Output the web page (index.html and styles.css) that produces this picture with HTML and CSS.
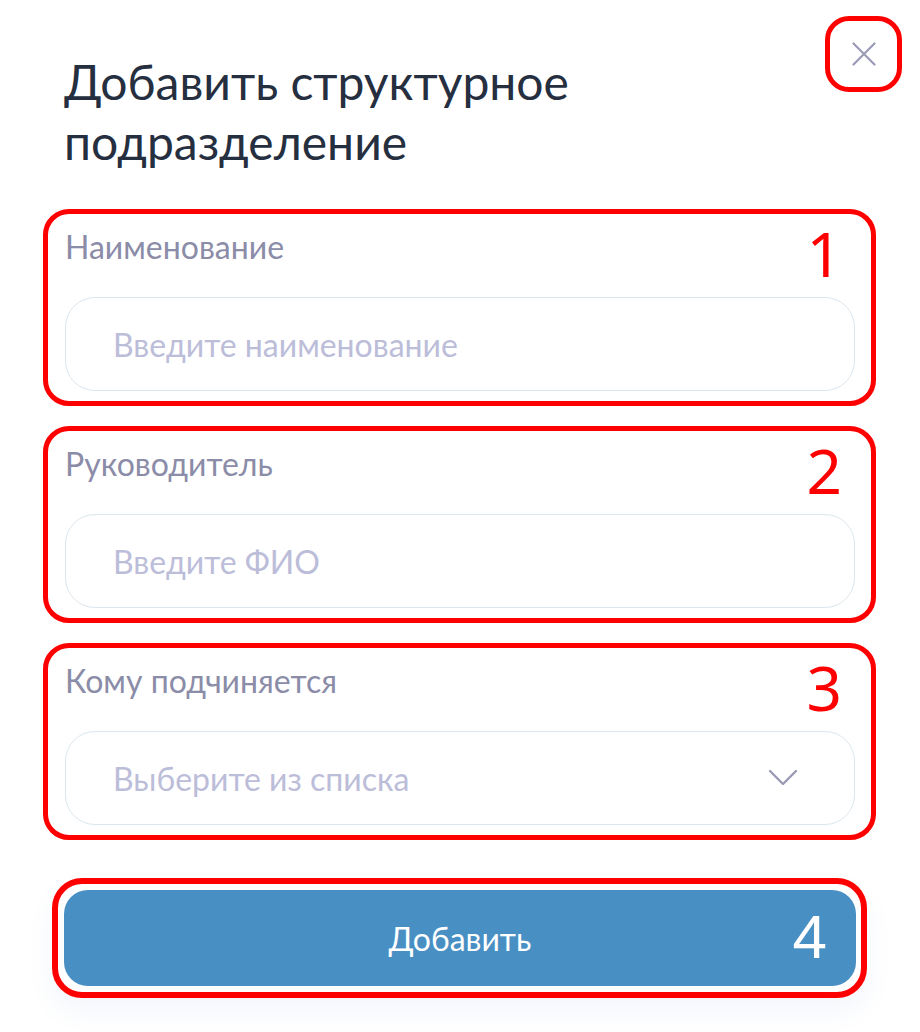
FILE: index.html
```html
<!DOCTYPE html>
<html lang="ru">
<head>
<meta charset="utf-8">
<title>Добавить структурное подразделение</title>
<link rel="stylesheet" href="styles.css">
</head>
<body>
<div class="modal">
  <div class="header">
    <h1 class="title">Добавить структурное<br>подразделение</h1>
    <button class="close" type="button" aria-label="Закрыть">
      <svg width="24" height="24" viewBox="0 0 24 24"><path d="M1.5 1.5 L22.5 22.5 M22.5 1.5 L1.5 22.5" stroke="#9a9cb6" stroke-width="2.2" stroke-linecap="round" fill="none"/></svg>
    </button>
  </div>

  <section class="field">
    <span class="mark">1</span>
    <label class="label">Наименование</label>
    <div class="input"><span class="placeholder">Введите наименование</span></div>
  </section>

  <section class="field">
    <span class="mark">2</span>
    <label class="label">Руководитель</label>
    <div class="input"><span class="placeholder">Введите ФИО</span></div>
  </section>

  <section class="field">
    <span class="mark">3</span>
    <label class="label">Кому подчиняется</label>
    <div class="input select">
      <span class="placeholder">Выберите из списка</span>
      <svg class="chevron" width="30" height="18" viewBox="0 0 30 18"><path d="M2 2 L15 15 L28 2" stroke="#9a9ab4" stroke-width="2.4" stroke-linecap="round" stroke-linejoin="round" fill="none"/></svg>
    </div>
  </section>

  <div class="action">
    <button class="submit" type="button">Добавить<span class="mark mark-light">4</span></button>
  </div>
</div>
</body>
</html>
```

FILE: styles.css
```css
* { box-sizing: border-box; }

html, body {
  margin: 0;
  padding: 0;
  background: #ffffff;
}

body {
  font-family: "Lato", "Noto Sans", sans-serif;
  width: 920px;
  height: 1032px;
  overflow: hidden;
}

.modal {
  padding: 16px 0 0 43px;
  width: 876px;
}

.header {
  display: flex;
  justify-content: space-between;
  align-items: flex-start;
  margin-right: -26px;
}

.title {
  margin: 0;
  padding: 36px 0 0 21px;
  font-size: 48px;
  line-height: 60px;
  font-weight: 400;
  color: #262f3f;
}

.close {
  width: 77px;
  height: 76px;
  border: 5px solid #ff0000;
  border-radius: 24px;
  background: #fff;
  padding: 0;
  display: flex;
  align-items: center;
  justify-content: center;
}

.field {
  position: relative;
  margin-top: 37px;
  border: 5px solid #ff0000;
  border-radius: 26px;
  padding: 15px 16px 10px 17px;
  height: 197px;
}

.field + .field {
  margin-top: 20px;
}

.label {
  display: block;
  font-size: 32px;
  line-height: 36px;
  color: #8b8ca8;
}

.input {
  margin-top: 32px;
  height: 94px;
  border: 1.5px solid #dbe7ee;
  border-radius: 30px;
  display: flex;
  align-items: center;
  padding: 0 56px 0 47px;
  justify-content: space-between;
}

.placeholder {
  font-size: 32px;
  color: #bcbdd9;
}

.chevron {
  display: block;
}

.mark {
  position: absolute;
  top: 8px;
  right: 29px;
  font-family: "Noto Sans", "Open Sans", sans-serif;
  font-size: 62px;
  line-height: 62px;
  color: #ff0000;
}

.action {
  margin-top: 38px;
  margin-left: 9px;
  width: 815px;
  height: 120px;
  border: 6px solid #ff0000;
  border-radius: 30px;
  padding: 6px 5px 6px 6px;
  box-shadow: 0 14px 26px rgba(90, 130, 200, 0.07);
}

.submit {
  position: relative;
  width: 100%;
  height: 96px;
  border: none;
  border-radius: 24px;
  background: #488fc4;
  color: #ffffff;
  font-family: "Lato", "Noto Sans", sans-serif;
  font-size: 32px;
  display: flex;
  align-items: center;
  justify-content: center;
  padding: 0;
}

.mark-light {
  color: #ffffff;
  top: 16px;
  right: 29px;
  font-family: "Liberation Sans", "Noto Sans", sans-serif;
}
```
